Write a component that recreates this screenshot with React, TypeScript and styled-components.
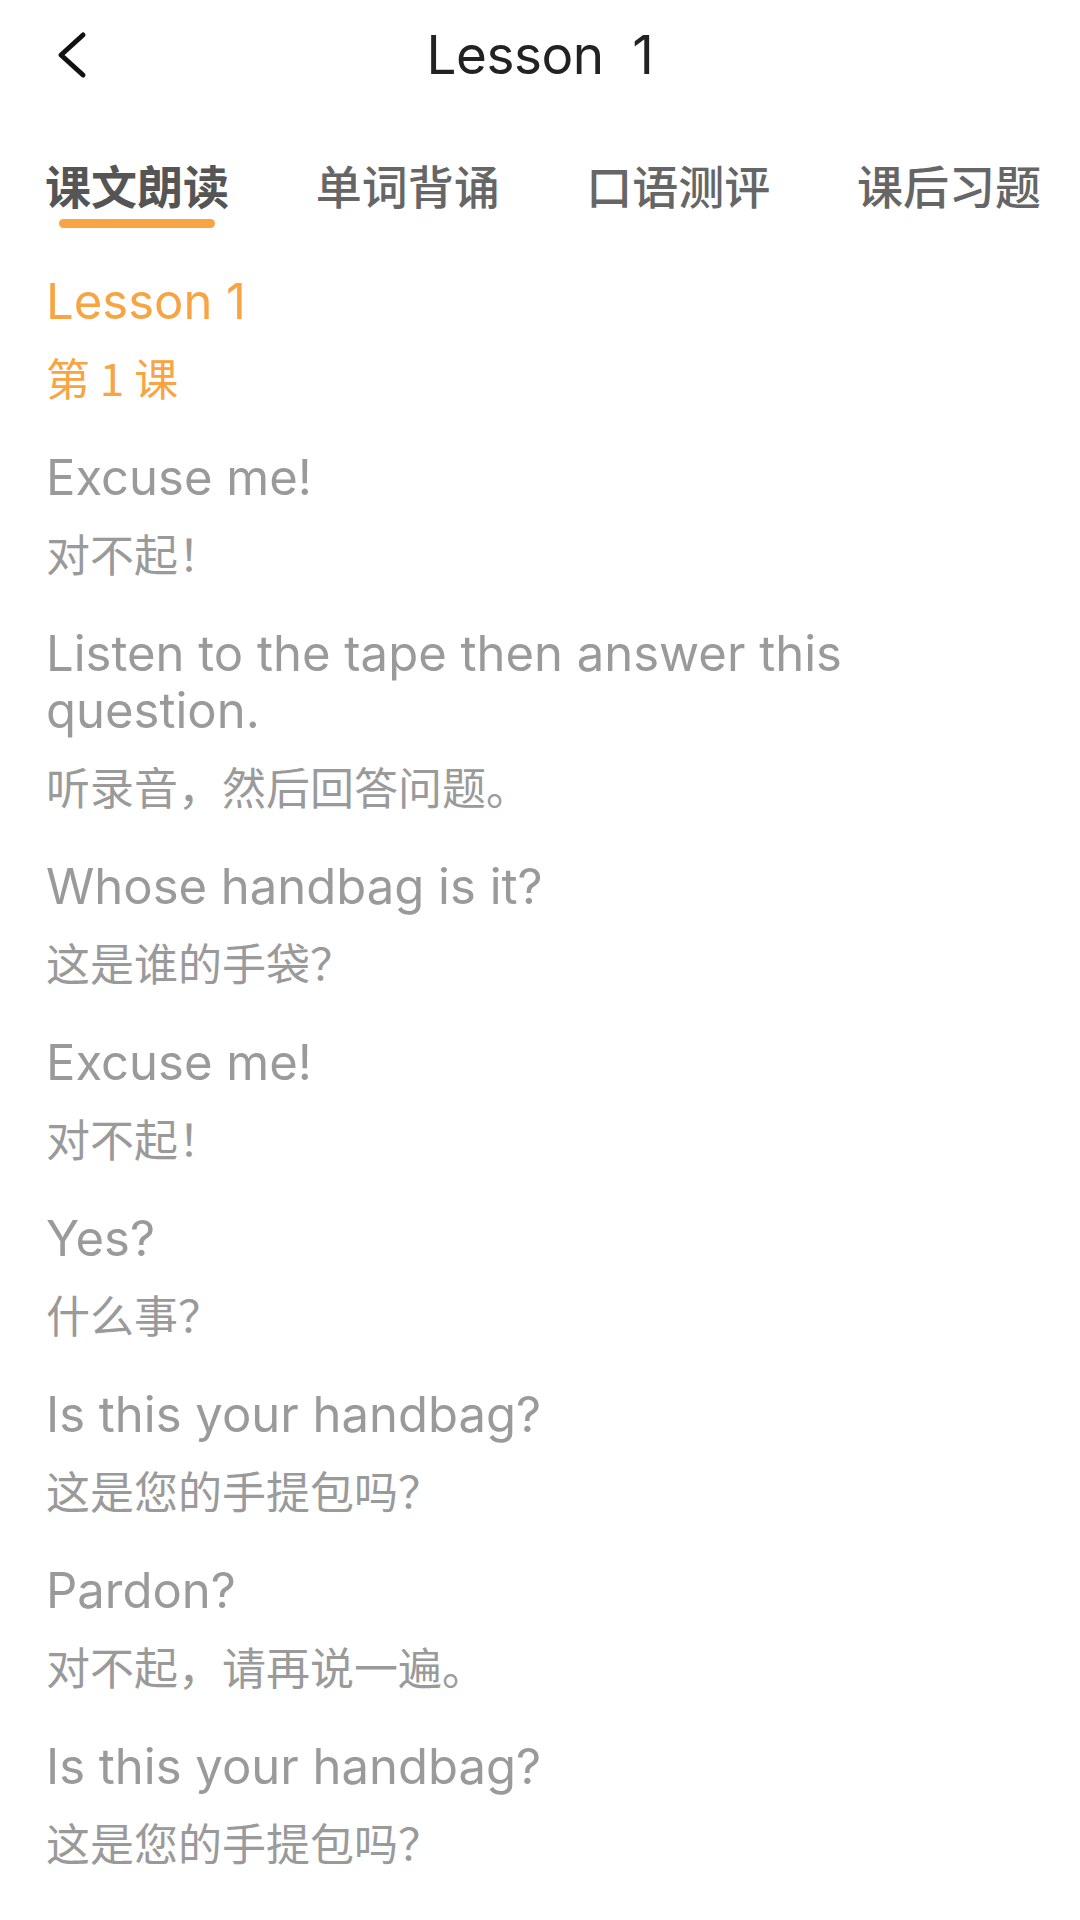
import React, { useState } from 'react';
import styled, { createGlobalStyle } from 'styled-components';

const GlobalStyle = createGlobalStyle`
  html, body {
    margin: 0;
    padding: 0;
    background: #ffffff;
  }
  body {
    font-family: Inter, 'Noto Sans CJK SC', sans-serif;
    -webkit-font-smoothing: antialiased;
  }
`;

const latin = `Inter, 'Noto Sans CJK SC', sans-serif`;
const cjk = `'Noto Sans CJK SC', 'Noto Sans', sans-serif`;

const Screen = styled.div`
  width: 1080px;
  height: 1920px;
  overflow: hidden;
  background: #ffffff;
`;

const NavBar = styled.header`
  display: grid;
  grid-template-columns: 1fr auto 1fr;
  align-items: center;
  height: 110px;
  padding: 0 57px;
`;

const BackButton = styled.button`
  justify-self: start;
  display: flex;
  align-items: center;
  padding: 0;
  border: none;
  background: none;
  cursor: pointer;
`;

const Title = styled.h1`
  margin: 0;
  font-family: ${latin};
  font-size: 53px;
  font-weight: 400;
  color: #222222;
  white-space: pre;
  letter-spacing: -0.5px;
`;

const TabBar = styled.nav`
  display: flex;
  justify-content: space-between;
  padding: 46px 39px 0 45px;
`;

const Tab = styled.button<{ $active: boolean }>`
  display: flex;
  flex-direction: column;
  align-items: center;
  padding: 0;
  border: none;
  background: none;
  cursor: pointer;
  font-family: ${cjk};
  font-size: 46px;
  line-height: 56px;
  font-weight: ${(p) => (p.$active ? 700 : 500)};
  color: ${(p) => (p.$active ? '#555555' : '#666666')};
`;

const Indicator = styled.span<{ $active: boolean }>`
  display: block;
  width: 156px;
  height: 9px;
  margin-top: 7px;
  border-radius: 5px;
  background: ${(p) => (p.$active ? '#F8A442' : 'transparent')};
`;

const Content = styled.main`
  display: flex;
  flex-direction: column;
  gap: 47px;
  padding: 45px 46px 0;
`;

const Sentence = styled.div<{ $accent?: boolean }>`
  display: flex;
  flex-direction: column;
  gap: 22px;
  color: ${(p) => (p.$accent ? '#F8A442' : '#9A9A9A')};
`;

const English = styled.div`
  font-family: ${latin};
  font-size: 49px;
  line-height: 57px;
  font-weight: 400;
`;

const Chinese = styled.div`
  font-family: ${cjk};
  font-size: 44px;
  line-height: 50px;
  font-weight: 400;
`;

const tabs = ['课文朗读', '单词背诵', '口语测评', '课后习题'];

const lines: [string, string][] = [
  ['Excuse me!', '对不起！'],
  ['Listen to the tape then answer this question.', '听录音，然后回答问题。'],
  ['Whose handbag is it?', '这是谁的手袋？'],
  ['Excuse me!', '对不起！'],
  ['Yes?', '什么事？'],
  ['Is this your handbag?', '这是您的手提包吗？'],
  ['Pardon?', '对不起，请再说一遍。'],
  ['Is this your handbag?', '这是您的手提包吗？'],
  ['Yes, it is.', '是的，是我的。'],
  ['Thank you very much.', '非常感谢！'],
];

const BackIcon = () => (
  <svg width="30" height="48" viewBox="0 0 30 48">
    <polyline
      points="26,4 4,24 26,44"
      fill="none"
      stroke="#111111"
      strokeWidth="5"
      strokeLinecap="round"
      strokeLinejoin="round"
    />
  </svg>
);

const App: React.FC = () => {
  const [active, setActive] = useState(0);

  return (
    <Screen>
      <GlobalStyle />
      <NavBar>
        <BackButton aria-label="back">
          <BackIcon />
        </BackButton>
        <Title>{'Lesson  1'}</Title>
        <span />
      </NavBar>

      <TabBar>
        {tabs.map((t, i) => (
          <Tab key={t} $active={i === active} onClick={() => setActive(i)}>
            {t}
            <Indicator $active={i === active} />
          </Tab>
        ))}
      </TabBar>

      <Content>
        <Sentence $accent>
          <English>Lesson 1</English>
          <Chinese>第 1 课</Chinese>
        </Sentence>
        {lines.map(([en, zh], i) => (
          <Sentence key={i}>
            <English>{en}</English>
            <Chinese>{zh}</Chinese>
          </Sentence>
        ))}
      </Content>
    </Screen>
  );
};

export default App;
